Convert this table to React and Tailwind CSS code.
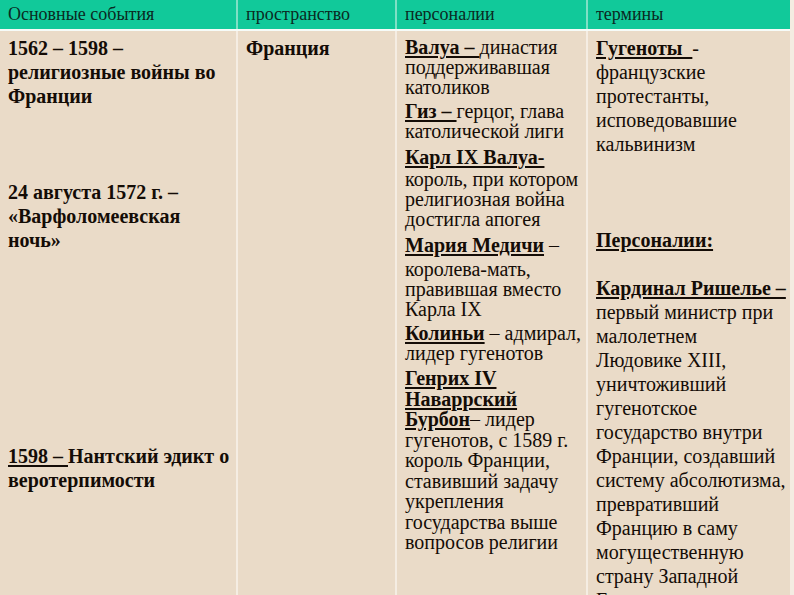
import React from 'react';

const U = ({ children, bold = true }) => (
  <span className={`underline decoration-[1.5px] underline-offset-2 whitespace-pre ${bold ? 'font-bold' : ''}`}>
    {children}
  </span>
);

const HeadCell = ({ children, last }) => (
  <div className={`flex items-center pl-2 text-[18px] text-[#0a2a22] ${last ? '' : 'border-r-2 border-[#7fe0c6]'}`}>
    {children}
  </div>
);

export default function App() {
  return (
    <div className="w-[794px] h-[595px] overflow-hidden bg-[#f4ece2] text-[#140c06] font-['Liberation_Serif','Times_New_Roman',serif]">
      <div className="w-[790px]">
        <div className="grid grid-cols-[238px_159px_191px_202px] h-[29px] bg-[#11c99a]">
          <HeadCell>Основные события</HeadCell>
          <HeadCell>пространство</HeadCell>
          <HeadCell>персоналии</HeadCell>
          <HeadCell last>термины</HeadCell>
        </div>
        <div className="h-[2px] bg-[#f6fbf8]" />
        <div className="grid grid-cols-[238px_159px_191px_202px] h-[564px] bg-[#eadbc8]">
          {/* события */}
          <div className="border-r-2 border-[#f5ede3] pl-2 pt-[5px] text-[20px] leading-[24px] font-bold whitespace-nowrap">
            <p>
              1562 – 1598 –<br />
              религиозные войны во<br />
              Франции
            </p>
            <p className="mt-[72px]">
              24 августа 1572 г. –<br />
              «Варфоломеевская<br />
              ночь»
            </p>
            <p className="mt-[192px]">
              <U bold={false}>1598 – </U>Нантский эдикт о<br />
              веротерпимости
            </p>
          </div>

          {/* пространство */}
          <div className="border-r-2 border-[#f5ede3] pl-2 pt-[5px] text-[20px] leading-[24px] font-bold">
            <p>Франция</p>
          </div>

          {/* персоналии */}
          <div className="border-r-2 border-[#f5ede3] pl-2 pt-[6px] text-[20px] leading-[20px] whitespace-nowrap">
            <p>
              <U>Валуа – </U>династия<br />
              поддерживавшая<br />
              католиков
            </p>
            <p className="mt-[4px]">
              <U>Гиз – </U>герцог, глава<br />
              католической лиги
            </p>
            <p className="mt-[6px]">
              <U>Карл IX Валуа-</U>
            </p>
            <p className="mt-[2px]">
              король, при котором<br />
              религиозная война<br />
              достигла апогея
            </p>
            <p className="mt-[6px]">
              <U>Мария Медичи</U> –
            </p>
            <p className="mt-[4px]">
              королева-мать,<br />
              правившая вместо<br />
              Карла IX
            </p>
            <p className="mt-[4px]">
              <U>Колиньи</U> – адмирал,<br />
              лидер гугенотов
            </p>
            <p className="mt-[5px] leading-[20.5px]">
              <U>Генрих IV</U><br />
              <U>Наваррский</U><br />
              <U>Бурбон</U>– лидер<br />
              гугенотов, с 1589 г.<br />
              король Франции,<br />
              ставивший задачу<br />
              укрепления<br />
              государства выше<br />
              вопросов религии
            </p>
          </div>

          {/* термины */}
          <div className="pl-2 pt-[5px] text-[20px] leading-[24px] whitespace-nowrap">
            <p>
              <U>Гугеноты  </U>-<br />
              французские<br />
              протестанты,<br />
              исповедовавшие<br />
              кальвинизм
            </p>
            <p className="mt-[72px]">
              <U>Персоналии:</U>
            </p>
            <p className="mt-[24px]">
              <U>Кардинал Ришелье –</U><br />
              первый министр при<br />
              малолетнем<br />
              Людовике XIII,<br />
              уничтоживший<br />
              гугенотское<br />
              государство внутри<br />
              Франции, создавший<br />
              систему абсолютизма,<br />
              превративший<br />
              Францию в саму<br />
              могущественную<br />
              страну Западной<br />
              Европы
            </p>
          </div>
        </div>
      </div>
    </div>
  );
}
